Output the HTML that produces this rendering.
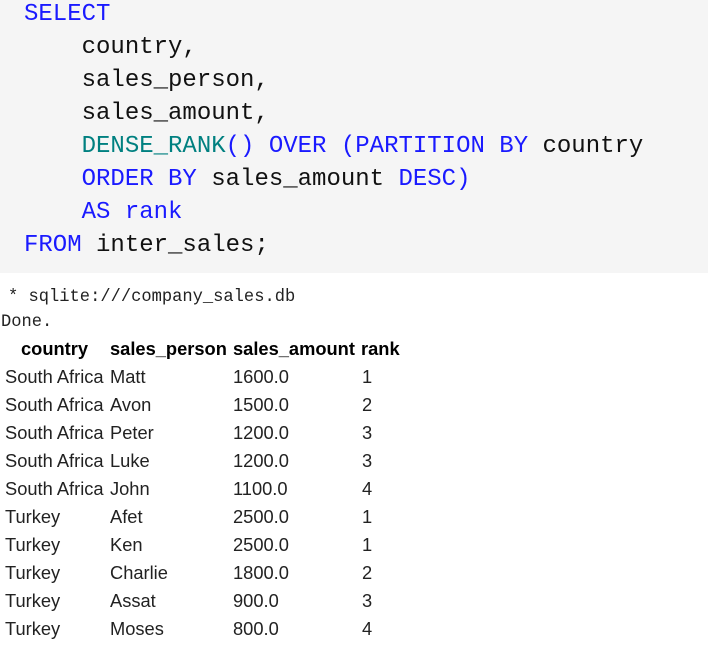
<!DOCTYPE html>
<html><head><style>
body{margin:0;width:708px;height:647px;background:#fff;overflow:hidden;position:relative}
.code{position:absolute;left:0;top:0;width:708px;height:273px;background:#f5f5f5}
.code pre{margin:0;position:absolute;left:24px;top:-2px;font-family:"Liberation Mono",monospace;font-size:24px;line-height:33px;color:#111}
.k{color:#1a1aff}.f{color:#008080}
.t{position:absolute;font-family:"Liberation Sans",sans-serif;font-size:18.3px;color:#222;white-space:nowrap;line-height:20px}
.m{position:absolute;font-family:"Liberation Mono",monospace;font-size:17.1px;color:#222;white-space:nowrap;line-height:20px}
b{font-weight:bold;color:#000}
</style></head><body>
<div class="code"><pre><span class="k">SELECT</span>
    country,
    sales_person,
    sales_amount,
    <span class="f">DENSE_RANK</span><span class="k">() OVER (PARTITION BY</span> country
    <span class="k">ORDER BY</span> sales_amount <span class="k">DESC)</span>
    <span class="k">AS rank</span>
<span class="k">FROM</span> inter_sales;</pre></div>
<div class="m" style="left:8px;top:288px">* sqlite:///company_sales.db</div>
<div class="m" style="left:1px;top:313px">Done.</div>
<div class="t" style="left:21px;top:339px"><b>country</b></div>
<div class="t" style="left:110px;top:339px"><b>sales_person</b></div>
<div class="t" style="left:233px;top:339px"><b>sales_amount</b></div>
<div class="t" style="left:361px;top:339px"><b>rank</b></div>
<div class="t" style="left:5px;top:367px">South Africa</div><div class="t" style="left:110px;top:367px">Matt</div><div class="t" style="left:233px;top:367px">1600.0</div><div class="t" style="left:362px;top:367px">1</div>
<div class="t" style="left:5px;top:395px">South Africa</div><div class="t" style="left:110px;top:395px">Avon</div><div class="t" style="left:233px;top:395px">1500.0</div><div class="t" style="left:362px;top:395px">2</div>
<div class="t" style="left:5px;top:423px">South Africa</div><div class="t" style="left:110px;top:423px">Peter</div><div class="t" style="left:233px;top:423px">1200.0</div><div class="t" style="left:362px;top:423px">3</div>
<div class="t" style="left:5px;top:451px">South Africa</div><div class="t" style="left:110px;top:451px">Luke</div><div class="t" style="left:233px;top:451px">1200.0</div><div class="t" style="left:362px;top:451px">3</div>
<div class="t" style="left:5px;top:479px">South Africa</div><div class="t" style="left:110px;top:479px">John</div><div class="t" style="left:233px;top:479px">1100.0</div><div class="t" style="left:362px;top:479px">4</div>
<div class="t" style="left:5px;top:507px">Turkey</div><div class="t" style="left:110px;top:507px">Afet</div><div class="t" style="left:233px;top:507px">2500.0</div><div class="t" style="left:362px;top:507px">1</div>
<div class="t" style="left:5px;top:535px">Turkey</div><div class="t" style="left:110px;top:535px">Ken</div><div class="t" style="left:233px;top:535px">2500.0</div><div class="t" style="left:362px;top:535px">1</div>
<div class="t" style="left:5px;top:563px">Turkey</div><div class="t" style="left:110px;top:563px">Charlie</div><div class="t" style="left:233px;top:563px">1800.0</div><div class="t" style="left:362px;top:563px">2</div>
<div class="t" style="left:5px;top:591px">Turkey</div><div class="t" style="left:110px;top:591px">Assat</div><div class="t" style="left:233px;top:591px">900.0</div><div class="t" style="left:362px;top:591px">3</div>
<div class="t" style="left:5px;top:619px">Turkey</div><div class="t" style="left:110px;top:619px">Moses</div><div class="t" style="left:233px;top:619px">800.0</div><div class="t" style="left:362px;top:619px">4</div>
</body></html>
